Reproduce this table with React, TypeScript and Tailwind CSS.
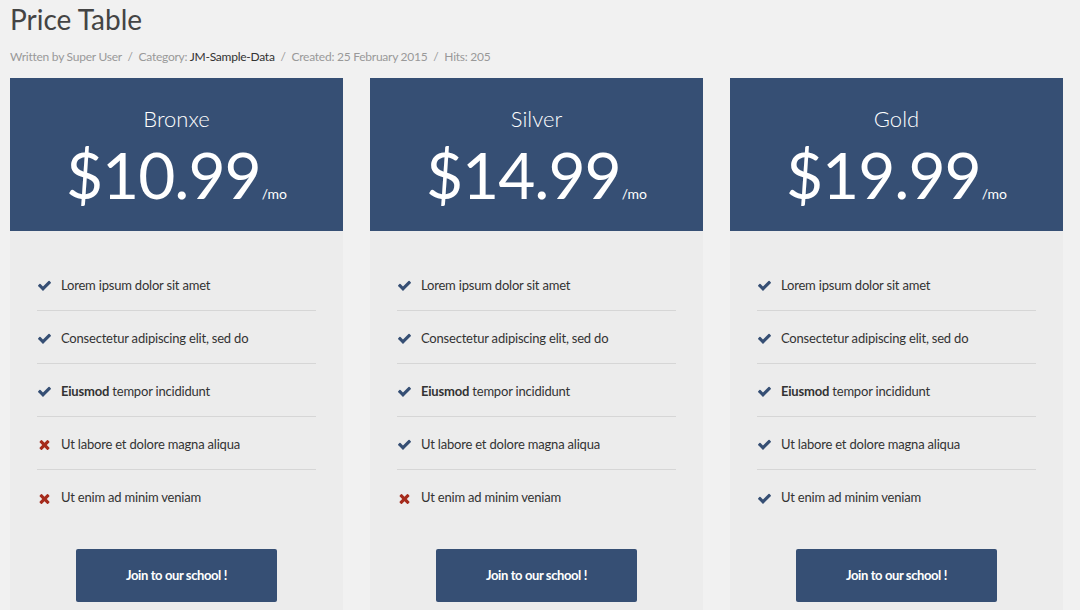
import React from "react";

type Feature = { text: string; bold?: string; ok: boolean };
type Plan = { name: string; price: string; features: Feature[] };

const base = [
  { text: "Lorem ipsum dolor sit amet" },
  { text: "Consectetur adipiscing elit, sed do" },
  { bold: "Eiusmod", text: " tempor incididunt" },
  { text: "Ut labore et dolore magna aliqua" },
  { text: "Ut enim ad minim veniam" },
];

function withFlags(flags: boolean[]): Feature[] {
  return base.map((f, i) => ({ ...f, ok: flags[i] }));
}

const plans: Plan[] = [
  { name: "Bronxe", price: "$10.99", features: withFlags([true, true, true, false, false]) },
  { name: "Silver", price: "$14.99", features: withFlags([true, true, true, true, false]) },
  { name: "Gold", price: "$19.99", features: withFlags([true, true, true, true, true]) },
];

function CheckIcon() {
  return (
    <svg viewBox="0 0 1792 1792" className="w-[15px] h-[15px] text-[#364f74]" fill="currentColor">
      <path d="M1671 566q0 40-28 68l-724 724-136 136q-28 28-68 28t-68-28l-136-136-362-362q-28-28-28-68t28-68l136-136q28-28 68-28t68 28l294 295 656-657q28-28 68-28t68 28l136 136q28 28 28 68z" />
    </svg>
  );
}

function TimesIcon() {
  return (
    <svg viewBox="0 0 1792 1792" className="w-[15px] h-[15px] text-[#a52b1c]" fill="currentColor">
      <path d="M1490 1322q0 40-28 68l-136 136q-28 28-68 28t-68-28l-294-294-294 294q-28 28-68 28t-68-28l-136-136q-28-28-28-68t28-68l294-294-294-294q-28-28-28-68t28-68l136-136q28-28 68-28t68 28l294 294 294-294q28-28 68-28t68 28l136 136q28 28 28 68t-28 68l-294 294 294 294q28 28 28 68z" />
    </svg>
  );
}

function PlanCard({ plan }: { plan: Plan }) {
  return (
    <div className="w-[333px] bg-[#ececec] flex flex-col">
      <div className="h-[153px] bg-[#364f74] text-white flex flex-col items-center pt-[27px]">
        <div className="text-[22px] leading-[28px] font-light">{plan.name}</div>
        <div className="flex items-baseline mt-[7px]">
          <span className="text-[64px] leading-[70px] tracking-[-1px]">{plan.price}</span>
          <span className="text-[14px] ml-[1px]">/mo</span>
        </div>
      </div>
      <ul className="px-[27px] pt-[27px]">
        {plan.features.map((f, i) => (
          <li
            key={i}
            className={`h-[53px] pt-[3px] flex items-center text-[13px] tracking-[-0.2px] text-[#333] ${i < 4 ? "border-b border-[#d6d6d6]" : ""}`}
          >
            <span className="w-[24px] flex items-center">{f.ok ? <CheckIcon /> : <TimesIcon />}</span>
            <span>
              {f.bold && <b className="font-bold">{f.bold}</b>}
              {f.text}
            </span>
          </li>
        ))}
      </ul>
      <div className="flex justify-center pt-[26px] pb-[10px]">
        <button className="w-[201px] h-[53px] bg-[#364f74] text-white text-[13px] tracking-[-0.4px] font-bold rounded-[2px]">
          Join to our school !
        </button>
      </div>
    </div>
  );
}

export default function App() {
  return (
    <div
      className="w-[1080px] h-[610px] overflow-hidden bg-[#f1f1f1] px-[10px]"
      style={{ fontFamily: "Lato, 'Liberation Sans', sans-serif" }}
    >
      <h1 className="text-[28px] leading-[38px] text-[#444]">Price Table</h1>
      <div className="text-[12px] tracking-[-0.25px] text-[#999] mt-[10px] leading-[18px]">
        Written by Super User <span className="mx-[3px]">/</span> Category:{" "}
        <span className="text-[#333]">JM-Sample-Data</span> <span className="mx-[3px]">/</span> Created: 25 February 2015{" "}
        <span className="mx-[3px]">/</span> Hits: 205
      </div>
      <div className="flex gap-[27px] mt-[12px]">
        {plans.map((p) => (
          <PlanCard key={p.name} plan={p} />
        ))}
      </div>
    </div>
  );
}
